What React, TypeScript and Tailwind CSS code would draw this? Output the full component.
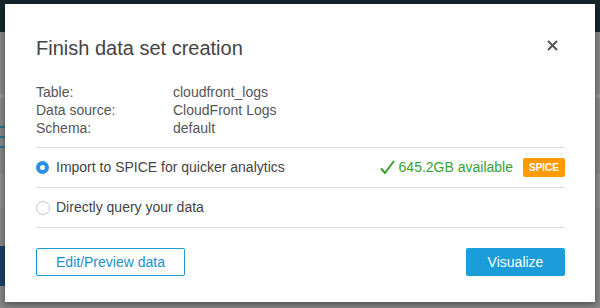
import React from "react";

const font = { fontFamily: '"Liberation Sans", Arial, Helvetica, sans-serif' };

const details: [string, string][] = [
  ["Table:", "cloudfront_logs"],
  ["Data source:", "CloudFront Logs"],
  ["Schema:", "default"],
];

const Radio = ({ checked }: { checked?: boolean }) =>
  checked ? (
    <span className="flex h-[13px] w-[13px] items-center justify-center rounded-full bg-[#2b8ee6]">
      <span className="h-[5px] w-[5px] rounded-full bg-white" />
    </span>
  ) : (
    <span className="h-[14px] w-[14px] rounded-full border border-[#c4c4c4] bg-white" />
  );

export default function App() {
  return (
    <div className="relative h-[308px] w-[600px] overflow-hidden bg-[#858585]" style={font}>
      {/* dimmed page behind the dialog */}
      <div className="h-[32px] bg-[#14262e]" />
      <div className="mt-[62px] h-[4px] bg-[#939393]" />
      <div className="mt-[28px] flex flex-col gap-[8px]">
        <div className="h-[2px] w-[6px] bg-[#2e6f95]" />
        <div className="h-[2px] w-[6px] bg-[#2e6f95]" />
        <div className="h-[2px] w-[6px] bg-[#2e6f95]" />
      </div>
      <div className="mt-[26px] h-[34px] bg-[#8e8e8e]" />
      <div className="mt-[38px] h-[40px] w-[6px] bg-[#1b3f66]" />

      <div className="absolute left-[5px] top-[4px] flex h-[298px] w-[590px] flex-col bg-white pl-[31px] pr-[30px] pt-[32px] shadow-[0_2px_6px_rgba(0,0,0,0.45)]">
        <div className="flex justify-between">
          <h1 className="text-[20px] leading-[24px] text-[#444]">Finish data set creation</h1>
          <svg width="11" height="11" viewBox="0 0 11 11" className="mr-[7px] mt-[4px]">
            <path d="M1 1L10 10M10 1L1 10" stroke="#555" strokeWidth="2" />
          </svg>
        </div>

        <div className="mt-[23px] flex flex-col text-[14px] leading-[18px] text-[#555]">
          {details.map(([k, v]) => (
            <div key={k} className="flex">
              <span className="w-[137px]">{k}</span>
              <span>{v}</span>
            </div>
          ))}
        </div>

        <div className="mt-[10px] border-t border-[#dcdcdc]">
          <div className="flex h-[40px] items-center border-b border-[#dcdcdc] text-[14px] text-[#444]">
            <Radio checked />
            <span className="ml-[7px]">Import to SPICE for quicker analytics</span>
            <span className="ml-auto flex items-center text-[#39a02f]">
              <svg width="15" height="15" viewBox="0 0 15 15" className="mr-[4px]">
                <path d="M1 8.5L5 13L14 1" fill="none" stroke="#39a02f" strokeWidth="2" />
              </svg>
              645.2GB available
            </span>
            <span className="ml-[10px] flex h-[19px] w-[42px] items-center justify-center rounded-[2px] bg-[#ff9a00] text-[10px] font-bold text-white">
              SPICE
            </span>
          </div>
          <div className="flex h-[40px] items-center border-b border-[#dcdcdc] text-[14px] text-[#444]">
            <Radio />
            <span className="ml-[6px]">Directly query your data</span>
          </div>
        </div>

        <div className="mt-[20px] flex justify-between">
          <button className="h-[28px] w-[149px] rounded-[2px] border border-[#1e9bd7] bg-white text-[14px] text-[#1a8fcc]">
            Edit/Preview data
          </button>
          <button className="h-[28px] w-[99px] rounded-[2px] bg-[#1b9dd9] text-[14px] text-white">
            Visualize
          </button>
        </div>
      </div>
    </div>
  );
}
